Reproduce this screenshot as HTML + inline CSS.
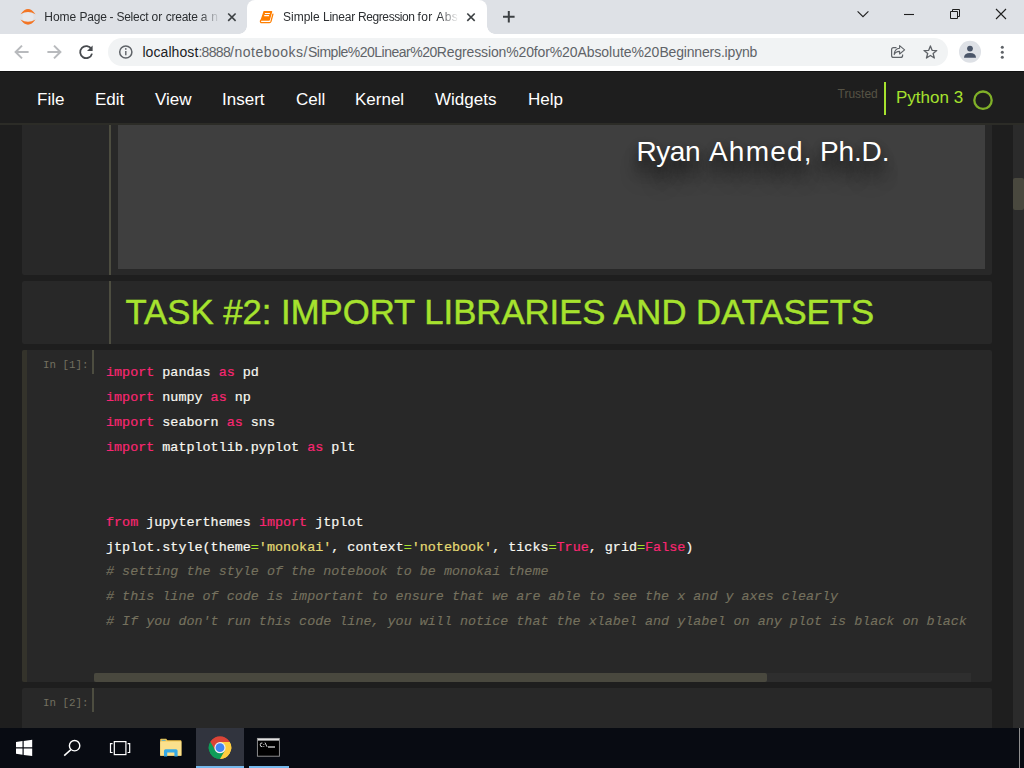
<!DOCTYPE html>
<html>
<head>
<meta charset="utf-8">
<title>Simple Linear Regression for Absolute Beginners</title>
<style>
*{margin:0;padding:0;box-sizing:border-box;}
html,body{width:1024px;height:768px;overflow:hidden;background:#1e1e1e;font-family:"Liberation Sans",sans-serif;}
.abs{position:absolute;}
#root{position:relative;width:1024px;height:768px;overflow:hidden;}

/* ---------- chrome tab strip ---------- */
#tabstrip{left:0;top:0;width:1024px;height:34px;background:#dee1e6;}
.tabtxt span{white-space:pre;}
.tabtxt{color:#2b2e31;-webkit-mask-image:linear-gradient(to right,#000 0,#000 156px,rgba(0,0,0,0) 176px);mask-image:linear-gradient(to right,#000 0,#000 156px,rgba(0,0,0,0) 176px);font-size:12px;white-space:nowrap;overflow:hidden;top:9px;height:16px;line-height:16px;}
#tab2{left:247px;top:0px;width:240px;height:34px;background:#fff;border-radius:8px 8px 0 0;}
#tab2:before,#tab2:after{content:"";position:absolute;bottom:0;width:8px;height:8px;}
#tab2:before{left:-8px;background:radial-gradient(circle at 0 0,rgba(255,255,255,0) 7.5px,#fff 8px);}
#tab2:after{right:-8px;background:radial-gradient(circle at 100% 0,rgba(255,255,255,0) 7.5px,#fff 8px);}

/* ---------- chrome toolbar ---------- */
#toolbar{left:0;top:34px;width:1024px;height:37px;background:#fff;}
#omni{left:108px;top:38px;width:840px;height:28px;border-radius:14px;background:#f1f3f4;}
#url{left:142px;top:44px;font-size:14px;line-height:16px;color:#5f6368;white-space:nowrap;}
#url b{font-weight:normal;color:#202124;}

/* ---------- jupyter header ---------- */
#jhead{left:0;top:71px;width:1024px;height:52px;background:#1e1e1e;}
.menu{top:90px;font-size:17px;line-height:20px;color:#fff;white-space:nowrap;}

/* ---------- notebook ---------- */
#nbwrap{left:0;top:123px;width:1024px;height:605px;background:#1e1e1e;}
.cell{left:22px;width:970px;background:#282828;}
.vline{width:1px;background:#4d4d40;}
.prompt{font-family:"Liberation Mono",monospace;font-size:10.8px;line-height:14px;color:#737060;white-space:pre;}
.code{-webkit-text-stroke:0.2px;font-family:"Liberation Mono",monospace;font-size:13.42px;line-height:25px;color:#f8f8f2;white-space:pre;left:106px;}
.k{color:#f92672;}
.s{color:#e6db74;}
.o{color:#a6e22e;}
.c{-webkit-text-stroke:0.12px;color:#75715e;font-style:italic;position:relative;top:-1px;}


#ryan{left:518.5px;top:10px;font-size:28px;line-height:34px;color:#fff;white-space:nowrap;text-shadow:0 4px 8px rgba(0,0,0,.35),0 11px 14px rgba(0,0,0,.42),0 19px 18px rgba(0,0,0,.45);}
#h1{-webkit-text-stroke:0.45px;left:125.5px;top:291.6px;font-size:34.7px;line-height:40px;color:#a6e22e;white-space:nowrap;}
/* ---------- taskbar ---------- */
#taskbar{left:0;top:728px;width:1024px;height:40px;background:#080b12;}
</style>
</head>
<body>
<div id="root">

<!-- tab strip -->
<div id="tabstrip" class="abs"></div>
<div id="tab2" class="abs"></div>
<div class="abs tabtxt" style="left:44px;width:176px;"><span class="abs" style="left:0.3px;letter-spacing:-0.01px;">Home </span><span class="abs" style="left:35.6px;letter-spacing:-0.27px;">Page </span><span class="abs" style="left:65.6px;letter-spacing:-0.27px;">- </span><span class="abs" style="left:72.4px;letter-spacing:-0.24px;">Select </span><span class="abs" style="left:107.4px;letter-spacing:0.09px;">or </span><span class="abs" style="left:121.7px;letter-spacing:-0.23px;">create </span><span class="abs" style="left:156.8px;letter-spacing:0.19px;">a </span><span class="abs" style="left:167.2px;letter-spacing:0.31px;">n</span></div>
<div class="abs tabtxt" style="left:283px;width:176px;"><span class="abs" style="left:0.1px;letter-spacing:-0.02px;">Simple </span><span class="abs" style="left:40.0px;letter-spacing:-0.24px;">Linear </span><span class="abs" style="left:75.0px;letter-spacing:-0.41px;">Regression </span><span class="abs" style="left:134.5px;letter-spacing:0.34px;">for </span><span class="abs" style="left:153.2px;letter-spacing:0.47px;">Abs</span></div>

<!-- toolbar -->
<div id="toolbar" class="abs"></div>
<div id="omni" class="abs"></div>
<div id="url" class="abs"><b class="abs" style="left:0.4px;letter-spacing:0.08px;">localhost</b><span class="abs" style="left:56.4px;letter-spacing:-0.69px;">:8888</span><span class="abs" style="left:88.0px;letter-spacing:0.51px;">/notebooks/</span><span class="abs" style="left:166.0px;letter-spacing:-0.50px;">Simple%20Linear%20</span><span class="abs" style="left:294.8px;letter-spacing:-0.14px;">Regression%20for%20</span><span class="abs" style="left:435.4px;letter-spacing:-0.05px;">Absolute%20</span><span class="abs" style="left:517.4px;letter-spacing:-0.17px;">Beginners.ipynb</span></div>

<!-- chrome icons -->
<svg class="abs" style="left:0;top:0;" width="1024" height="71" viewBox="0 0 1024 71">
  <!-- jupyter favicon -->
  <circle cx="28" cy="16.9" r="5.6" fill="#e6e8ec"/>
  <path d="M20.5,14.3 Q28,3.9 35.5,14.3 Q28,9.7 20.5,14.3Z" fill="#f37524"/>
  <path d="M20.5,19.5 Q28,29.9 35.5,19.5 Q28,24.1 20.5,19.5Z" fill="#f37524"/>
  <!-- tab1 close -->
  <path d="M228.2,13.5 L235.6,20.9 M235.6,13.5 L228.2,20.9" stroke="#3c4043" stroke-width="1.6" fill="none"/>
  <!-- book favicon -->
  <path d="M263.6,10.9 L271.6,10.9 Q272.5,10.9 272.2,11.9 L269.9,20 Q269.7,20.7 269,20.7 L260.3,20.7 Z" fill="#ff7f00"/>
  <path d="M260.6,20.4 Q259.9,22.7 262,22.7 L269.4,22.7 Q270.6,22.7 271,21.4 L272.9,14.2" stroke="#ff7f00" stroke-width="1.3" fill="none" stroke-linecap="round"/>
  <path d="M264.9,13.5 L269.9,13.5 M264.2,15.6 L269.1,15.6" stroke="#fff" stroke-width="1.1" fill="none"/>
  <!-- tab2 close -->
  <path d="M467.3,13.5 L474.7,20.9 M474.7,13.5 L467.3,20.9" stroke="#3c4043" stroke-width="1.6" fill="none"/>
  <!-- new tab plus -->
  <path d="M503,16.8 L514.6,16.8 M508.8,11 L508.8,22.6" stroke="#3c4043" stroke-width="2" fill="none"/>
  <!-- window controls -->
  <path d="M857.6,11.3 L863,16.7 L868.4,11.3" stroke="#1f1f1f" stroke-width="1.1" fill="none"/>
  <path d="M904,14.5 L914,14.5" stroke="#1f1f1f" stroke-width="1.1" fill="none"/>
  <path d="M950.5,11.5 h7 v7 h-7 Z" stroke="#1f1f1f" stroke-width="1" fill="none"/>
  <path d="M952.5,11 V9.5 H959.5 V16.5 H958" stroke="#1f1f1f" stroke-width="1" fill="none"/>
  <path d="M996,9 L1006,19 M1006,9 L996,19" stroke="#1f1f1f" stroke-width="1.1" fill="none"/>
  <!-- back -->
  <path d="M28.6,52 L16,52 M22,45.6 L15.6,52 L22,58.4" stroke="#b8babd" stroke-width="2" fill="none"/>
  <!-- forward -->
  <path d="M47.4,52 L60,52 M54,45.6 L60.4,52 L54,58.4" stroke="#b8babd" stroke-width="2" fill="none"/>
  <!-- reload -->
  <path d="M91.4,49.2 A6,6 0 1 0 92,53.6" stroke="#474a4e" stroke-width="1.8" fill="none"/>
  <path d="M92.6,45.4 L92.6,51 L87,51 Z" fill="#474a4e"/>
  <!-- info -->
  <circle cx="125.8" cy="52" r="6.1" stroke="#5f6368" stroke-width="1.5" fill="none"/>
  <path d="M125.8,51 L125.8,55.2" stroke="#5f6368" stroke-width="1.4"/>
  <circle cx="125.8" cy="48.9" r="0.85" fill="#5f6368"/>
  <!-- share -->
  <path d="M896.5,47.6 L893.6,47.6 Q891.6,47.6 891.6,49.6 L891.6,55.4 Q891.6,57.4 893.6,57.4 L900.6,57.4 Q902.6,57.4 902.6,55.4 L902.6,54.6" stroke="#5f6368" stroke-width="1.2" fill="none"/>
  <path d="M899.6,45.6 L904.6,49.8 L899.6,54 L899.6,51.4 Q895.6,51.4 894.2,54.6 Q894.4,48.6 899.6,48.2 Z" stroke="#5f6368" stroke-width="1.1" fill="none" stroke-linejoin="round"/>
  <!-- star -->
  <path d="M930.40,45.90 L932.08,50.29 L936.77,50.53 L933.11,53.48 L934.34,58.02 L930.40,55.45 L926.46,58.02 L927.69,53.48 L924.03,50.53 L928.72,50.29 Z" stroke="#5f6368" stroke-width="1.3" fill="none" stroke-linejoin="round"/>
  <!-- profile -->
  <circle cx="970" cy="51.8" r="11" fill="#dee1e6"/>
  <circle cx="970" cy="48.6" r="2.9" fill="#4a5568"/>
  <path d="M964,57.8 Q964,53 970,53 Q976,53 976,57.8 Z" fill="#4a5568"/>
  <!-- menu -->
  <circle cx="1002.3" cy="47.3" r="1.5" fill="#5f6368"/>
  <circle cx="1002.3" cy="52.3" r="1.5" fill="#5f6368"/>
  <circle cx="1002.3" cy="57.3" r="1.5" fill="#5f6368"/>
</svg>

<!-- jupyter header -->
<div id="jhead" class="abs"></div>
<div class="abs menu" style="left:37px;">File</div>
<div class="abs menu" style="left:95px;">Edit</div>
<div class="abs menu" style="left:155px;">View</div>
<div class="abs menu" style="left:222px;">Insert</div>
<div class="abs menu" style="left:296px;">Cell</div>
<div class="abs menu" style="left:355px;">Kernel</div>
<div class="abs menu" style="left:435px;">Widgets</div>
<div class="abs menu" style="left:528px;">Help</div>

<div class="abs" style="left:0;top:71px;width:1024px;height:1px;background:#111;"></div>
<div class="abs" style="left:837.5px;top:87px;font-size:12px;line-height:14px;color:#565345;white-space:nowrap;">Trusted</div>
<div class="abs" style="left:884px;top:82px;width:2px;height:33px;background:#a6e22e;"></div>
<div class="abs" style="left:896px;top:88px;font-size:17px;line-height:20px;color:#a6e22e;white-space:nowrap;">Python 3</div>
<svg class="abs" style="left:970px;top:87px;" width="26" height="26" viewBox="970 87 26 26"><circle cx="983" cy="100.2" r="8.7" stroke="#80b028" stroke-width="2.3" fill="none"/></svg>

<!-- notebook -->
<div id="nbwrap" class="abs"></div>
<div class="abs" style="left:0;top:123px;width:1024px;height:2px;background:#2c2c27;"></div>
<!-- page scrollbar -->
<div class="abs" style="left:1013px;top:125px;width:11px;height:603px;background:#2b2b2b;"></div>
<div class="abs" style="left:1013px;top:178px;width:11px;height:32px;background:#49483e;border-radius:2px;"></div>

<!-- cell 1 : markdown with image -->
<div class="abs cell" style="top:125px;height:150px;border-radius:0 0 2px 2px;"></div>
<div class="abs vline" style="left:109px;top:125px;width:2px;height:150px;"></div>
<div class="abs" id="img" style="left:118px;top:125px;width:867px;height:144px;background:#3f3f3f;overflow:hidden;">
  <div class="abs" id="ryan"><span class="abs" style="left:0;letter-spacing:-0.45px;">Ryan</span><span class="abs" style="left:72.4px;letter-spacing:1.25px;">Ahmed,</span><span class="abs" style="left:183.4px;letter-spacing:-0.1px;">Ph.D.</span></div>
</div>

<!-- cell 2 : heading -->
<div class="abs cell" style="top:281px;height:63px;border-radius:2px;"></div>
<div class="abs vline" style="left:109px;top:281px;width:2px;height:63px;"></div>
<div class="abs" id="h1">TASK #2: IMPORT LIBRARIES AND DATASETS</div>

<!-- cell 3 : code (selected) -->
<div class="abs cell" style="top:350px;height:332px;border-radius:2px;"></div>
<div class="abs" style="left:22px;top:350px;width:5px;height:332px;background:#34332b;border-radius:2px 0 0 2px;"></div>
<div class="abs vline" style="left:92px;top:350px;width:2px;height:24px;"></div>
<div class="abs prompt" style="left:43px;top:357.6px;">In [1]:</div>
<div class="abs code" style="top:359.7px;"><span class="k">import</span> pandas <span class="k">as</span> pd
<span class="k">import</span> numpy <span class="k">as</span> np
<span class="k">import</span> seaborn <span class="k">as</span> sns
<span class="k">import</span> matplotlib.pyplot <span class="k">as</span> plt


<span class="k">from</span> jupyterthemes <span class="k">import</span> jtplot
jtplot.style(theme<span class="o">=</span><span class="s">'monokai'</span>, context<span class="o">=</span><span class="s">'notebook'</span>, ticks<span class="o">=</span><span class="k">True</span>, grid<span class="o">=</span><span class="k">False</span>)
<span class="c"># setting the style of the notebook to be monokai theme</span>
<span class="c"># this line of code is important to ensure that we are able to see the x and y axes clearly</span>
<span class="c"># If you don't run this code line, you will notice that the xlabel and ylabel on any plot is black on black</span></div>
<!-- horizontal scrollbar -->
<div class="abs" style="left:94px;top:673px;width:877px;height:9px;background:#2e2e2e;"></div>
<div class="abs" style="left:94px;top:673px;width:673px;height:9px;background:#49483e;border-radius:2px;"></div>

<!-- cell 4 : empty code -->
<div class="abs cell" style="top:688px;height:40px;border-radius:2px 2px 0 0;"></div>
<div class="abs vline" style="left:92px;top:688px;width:2px;height:24px;"></div>
<div class="abs prompt" style="left:43px;top:695.6px;">In [2]:</div>

<!-- taskbar -->
<div id="taskbar" class="abs"></div>
<div class="abs" style="left:196px;top:728px;width:48px;height:40px;background:#31343e;"></div>
<div class="abs" style="left:196px;top:766px;width:48px;height:2px;background:#76b9ed;"></div>
<div class="abs" style="left:249px;top:766px;width:40px;height:2px;background:#76b9ed;"></div>
<div class="abs" style="left:1019px;top:728px;width:1px;height:40px;background:#8f8f8f;"></div>
<svg class="abs" style="left:0;top:728px;" width="300" height="40" viewBox="0 728 300 40">
  <!-- windows logo -->
  <path d="M16,742 L22.5,741.1 L22.5,747.3 L16,747.3 Z M23.7,740.9 L32.2,739.7 L32.2,747.3 L23.7,747.3 Z M16,748.5 L22.5,748.5 L22.5,754.7 L16,753.8 Z M23.7,748.5 L32.2,748.5 L32.2,756.1 L23.7,754.9 Z" fill="#fff"/>
  <!-- search -->
  <circle cx="74.6" cy="745.7" r="5.2" stroke="#fff" stroke-width="1.4" fill="none"/>
  <path d="M70.9,749.6 L64.2,755.6" stroke="#fff" stroke-width="1.5" fill="none"/>
  <!-- task view -->
  <rect x="114.3" y="741.6" width="11.6" height="13" stroke="#fff" stroke-width="1.2" fill="none"/>
  <path d="M112.6,743.6 L110.5,743.6 L110.5,752.5 L112.6,752.5 M127.6,743.6 L129.7,743.6 L129.7,752.5 L127.6,752.5" stroke="#fff" stroke-width="1.2" fill="none"/>
  <!-- explorer -->
  <path d="M160.2,739.6 Q160.2,738.8 161,738.8 L166.2,738.8 L167.4,740.2 L180.6,740.2 Q181.4,740.2 181.4,741 L181.4,755.6 L160.2,755.6 Z" fill="#f5c64a"/>
  <rect x="160.2" y="741.4" width="21.2" height="14.4" fill="#fbe08c"/>
  <rect x="161.6" y="739.8" width="4" height="0.9" fill="#3aa9e4"/>
  <path d="M164,756.6 L164,750.8 Q164,749.2 165.6,749.2 L176,749.2 Q177.6,749.2 177.6,750.8 L177.6,756.6 L174.4,756.6 L174.4,752.4 L167.2,752.4 L167.2,756.6 Z" fill="#36a9e6"/>
  <!-- chrome -->
  <path d="M220,747.7 L210.3,742.1 A11.2,11.2 0 0 1 229.7,742.1 Z" fill="#db4437"/>
  <path d="M220,747.7 L229.7,742.1 A11.2,11.2 0 0 1 220,758.9 Z" fill="#ffcd40"/>
  <path d="M220,747.7 L220,758.9 A11.2,11.2 0 0 1 210.3,742.1 Z" fill="#0f9d58"/>
  <path d="M220,742.1 L229.7,742.1 A11.2,11.2 0 0 0 210.3,742.1 L215.15,750.5 Z" fill="#db4437"/>
  <path d="M224.85,750.5 L220,758.9 A11.2,11.2 0 0 0 229.7,742.1 L220,742.1 Z" fill="#ffcd40"/>
  <path d="M215.15,750.5 L210.3,742.1 A11.2,11.2 0 0 0 220,758.9 L224.85,750.5 Z" fill="#0f9d58"/>
  <circle cx="220" cy="747.7" r="5.6" fill="#f1f1f1"/>
  <circle cx="220" cy="747.7" r="4.4" fill="#4285f4"/>
  <!-- cmd -->
  <rect x="257.4" y="738.4" width="22" height="17.8" fill="#000" stroke="#9a9a9a" stroke-width="0.9"/>
  <rect x="257.8" y="738.6" width="21.2" height="2" fill="#e2e2e2"/>
  <path d="M262.4,743 Q260.2,742.6 260.2,744.8 Q260.2,747 262.4,746.6" stroke="#e8e8e8" stroke-width="0.9" fill="none"/>
  <path d="M263.8,744 L263.8,744.8 M263.8,746 L263.8,746.8" stroke="#e8e8e8" stroke-width="0.9"/>
  <path d="M265,742.6 L267,746.8" stroke="#e8e8e8" stroke-width="0.9"/>
  <path d="M268,747 L275,747" stroke="#fff" stroke-width="1.1"/>
</svg>

</div>
</body>
</html>
